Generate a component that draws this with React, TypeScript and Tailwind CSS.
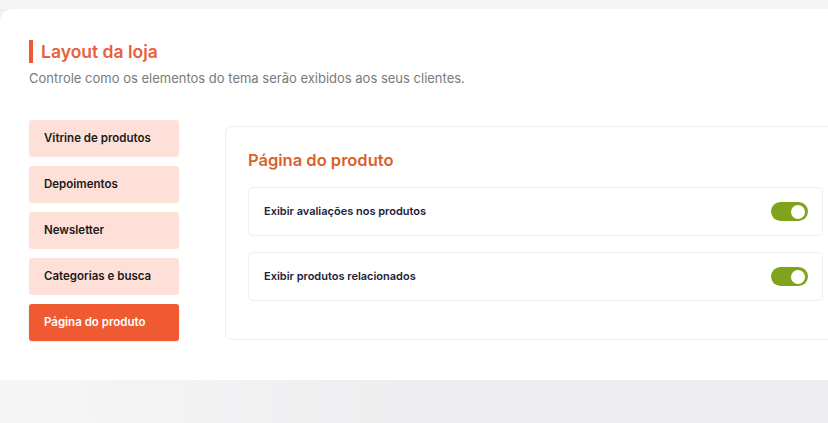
import { useState } from "react";

const menu = [
  "Vitrine de produtos",
  "Depoimentos",
  "Newsletter",
  "Categorias e busca",
  "Página do produto",
];

function Toggle({ on, onClick }: { on: boolean; onClick: () => void }) {
  return (
    <button
      onClick={onClick}
      className={`w-[37px] h-[19px] rounded-full flex items-center px-[3px] ${
        on ? "bg-[#7fa31c] justify-end" : "bg-[#d4d4d8] justify-start"
      }`}
    >
      <span className="w-[14px] h-[14px] rounded-full bg-white" />
    </button>
  );
}

export default function App() {
  const [active, setActive] = useState(4);
  const [opts, setOpts] = useState({ reviews: true, related: true });

  return (
    <div
      className="w-[828px] h-[423px] overflow-hidden bg-[#eeeef0] flex flex-col"
      style={{ fontFamily: "Inter, 'Open Sans', sans-serif" }}
    >
      <div className="h-[9px] bg-[#f5f5f6] shrink-0" />
      <div className="w-[900px] h-[371px] shrink-0 bg-white rounded-tl-[12px] shadow-[0_1px_3px_rgba(0,0,0,0.04)] pt-[31px] pl-[29px]">
        <div className="flex items-center gap-[8px]">
          <div className="w-[4px] h-[23px] bg-[#ec5b35]" />
          <h1 className="text-[17.5px] leading-[23px] font-semibold text-[#e8603c]">
            Layout da loja
          </h1>
        </div>
        <p className="mt-[7px] text-[13px] leading-[16px] text-[#7a7a7a]">
          Controle como os elementos do tema serão exibidos aos seus clientes.
        </p>

        <div className="flex gap-[46px] mt-[34px]">
          <div className="w-[150px] flex flex-col gap-[9px] shrink-0">
            {menu.map((m, i) => (
              <button
                key={m}
                onClick={() => setActive(i)}
                className={`h-[37px] rounded-[3px] text-left pl-[15px] text-[11.5px] font-semibold ${
                  i === active
                    ? "bg-[#f05a33] text-white shadow-[0_1px_2px_rgba(0,0,0,0.1)]"
                    : "bg-[#ffe0d9] text-[#1a1a1a]"
                }`}
              >
                {m}
              </button>
            ))}
          </div>

          <div className="mt-[6px] w-[621px] h-[214px] border border-[#efefef] rounded-[6px] pt-[21px] px-[22px]">
            <h2 className="text-[16.5px] leading-[24px] font-semibold text-[#d9622b]">
              Página do produto
            </h2>
            <div className="mt-[15px] flex flex-col gap-[16px]">
              <div className="h-[49px] border border-[#efefef] rounded-[5px] flex items-center justify-between pl-[15px] pr-[14px]">
                <span className="text-[11px] font-semibold text-[#22223a]">
                  Exibir avaliações nos produtos
                </span>
                <Toggle
                  on={opts.reviews}
                  onClick={() => setOpts({ ...opts, reviews: !opts.reviews })}
                />
              </div>
              <div className="h-[49px] border border-[#efefef] rounded-[5px] flex items-center justify-between pl-[15px] pr-[14px]">
                <span className="text-[11px] font-semibold text-[#22223a]">
                  Exibir produtos relacionados
                </span>
                <Toggle
                  on={opts.related}
                  onClick={() => setOpts({ ...opts, related: !opts.related })}
                />
              </div>
            </div>
          </div>
        </div>
      </div>
      <div className="flex-1 bg-gradient-to-r from-[#f6f6f7] via-[#eeeef0] to-[#eeeef0]" />
    </div>
  );
}
